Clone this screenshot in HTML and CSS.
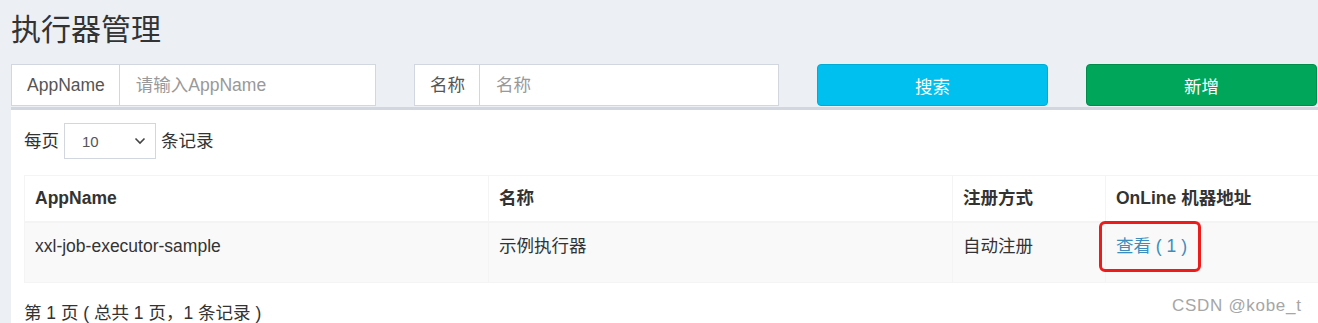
FILE: index.html
```html
<!DOCTYPE html>
<html lang="zh-CN">
<head>
    <meta charset="UTF-8">
    <title>执行器管理</title>
    <link rel="stylesheet" href="styles.css">
</head>
<body>
    <div class="page">
        <h1>执行器管理</h1>

        <div class="search-row">
            <div class="input-group">
                <span class="addon">AppName</span>
                <input class="field" type="text" placeholder="请输入AppName">
            </div>
            <div class="input-group">
                <span class="addon">名称</span>
                <input class="field" type="text" placeholder="名称">
            </div>
            <button class="btn btn-info">搜索</button>
            <button class="btn btn-success">新增</button>
        </div>

        <div class="box">
            <div class="length">
                每页
                <span class="select">10
                    <svg width="12" height="8" viewBox="0 0 12 8"><path d="M1.5 1.5 L6 6 L10.5 1.5" fill="none" stroke="#444" stroke-width="1.6"/></svg>
                </span>
                条记录
            </div>

            <table class="grid">
                <thead>
                    <tr>
                        <th class="c1">AppName</th>
                        <th class="c2">名称</th>
                        <th class="c3">注册方式</th>
                        <th class="c4">OnLine 机器地址</th>
                    </tr>
                </thead>
                <tbody>
                    <tr>
                        <td>xxl-job-executor-sample</td>
                        <td>示例执行器</td>
                        <td>自动注册</td>
                        <td class="online"><a href="#">查看 ( 1 )</a><span class="mark"></span></td>
                    </tr>
                </tbody>
            </table>

            <div class="info">第 1 页 ( 总共 1 页，1 条记录 )</div>
        </div>
    </div>
    <div class="watermark">CSDN @kobe_t</div>
</body>
</html>
```

FILE: styles.css
```css
html, body {
    margin: 0;
    height: 100%;
    overflow: hidden;
}
body {
    font-family: "Liberation Sans", Arial, "Noto Sans CJK SC", sans-serif;
    font-size: 17.5px;
    line-height: 25px;
    color: #333;
    background-color: #ecf0f5;
    position: relative;
}
.page {
    padding: 13px 0 0 11px;
}
h1 {
    margin: 0;
    font-size: 30px;
    line-height: 33px;
    font-weight: 400;
    color: #333;
}
.search-row {
    display: flex;
    margin-top: 18px;
    gap: 38px;
}
.input-group {
    display: flex;
    width: 365px;
    height: 42px;
    box-sizing: border-box;
    background: #fff;
    border: 1px solid #d2d6de;
}
.addon {
    display: flex;
    align-items: center;
    padding: 0 14px 0 15px;
    border-right: 1px solid #d2d6de;
    color: #555;
}
.field {
    flex: 1;
    min-width: 0;
    border: 0;
    outline: 0;
    padding: 0 16px;
    font-family: inherit;
    font-size: 17.5px;
    color: #555;
}
.field::placeholder {
    color: #999;
}
.btn {
    width: 231px;
    height: 42px;
    border-radius: 4px;
    font-family: inherit;
    font-size: 17.5px;
    color: #fff;
    cursor: pointer;
}
.btn-info {
    background-color: #00c0ef;
    border: 1px solid #00acd6;
}
.btn-success {
    background-color: #00a65a;
    border: 1px solid #008d4c;
}
.box {
    margin-top: 1px;
    background: #fff;
    border-top: 3px solid #d2d6de;
    padding: 13px 0 20px 13px;
    overflow: hidden;
}
.length {
    display: flex;
    align-items: center;
    gap: 5px;
    height: 36px;
}
.select {
    display: flex;
    align-items: center;
    justify-content: space-between;
    box-sizing: border-box;
    width: 92px;
    height: 36px;
    padding: 0 9px 0 17px;
    border: 1px solid #d2d6de;
    font-size: 15px;
    color: #555;
}
.grid {
    margin-top: 16px;
    border-collapse: collapse;
    table-layout: fixed;
    width: 1400px;
    border: 1px solid #f4f4f4;
}
.grid th, .grid td {
    text-align: left;
    padding: 10px 10px;
    border-left: 1px solid #f4f4f4;
    vertical-align: top;
}
.grid th {
    height: 25px;
    font-weight: 700;
    border-bottom: 2px solid #f4f4f4;
}
.grid td {
    height: 38px;
    padding-top: 11px;
    background-color: #f9f9f9;
}
.c1 { width: 443px; }
.c2 { width: 443px; }
.c3 { width: 132px; }
.online {
    position: relative;
    padding-left: 12px;
}
.online a {
    color: #3c8dbc;
    text-decoration: none;
}
.mark {
    position: absolute;
    left: -7px;
    top: -2px;
    width: 96px;
    height: 45px;
    border: 3px solid #ee1b1b;
    border-radius: 6px;
}
.info {
    margin-top: 18px;
}
.watermark {
    position: absolute;
    left: 1172px;
    top: 293px;
    font-size: 17px;
    color: #a6a6a6;
    letter-spacing: 0.7px;
}
```
